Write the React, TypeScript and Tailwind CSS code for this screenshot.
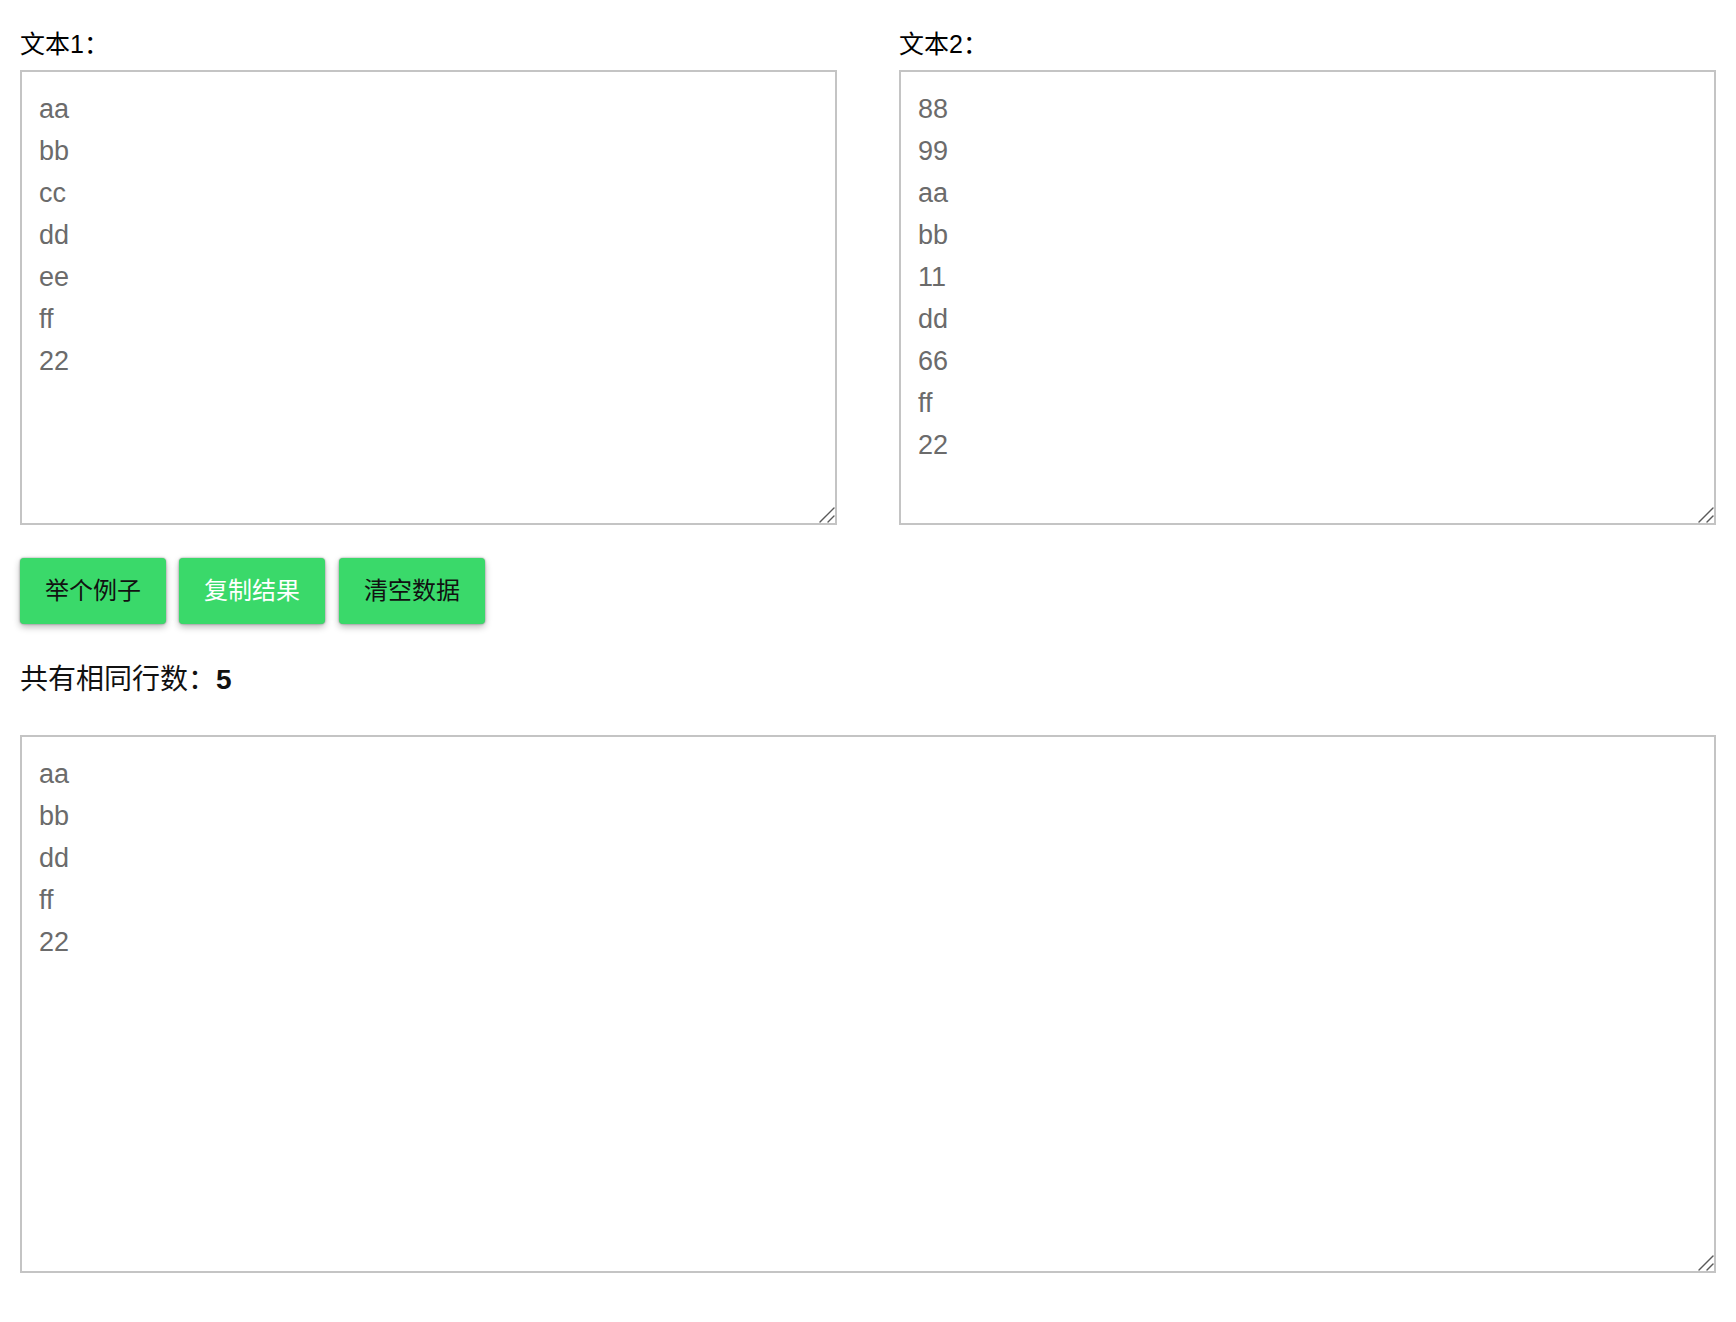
import React from "react";

const left = ["aa", "bb", "cc", "dd", "ee", "ff", "22"].join("\n");
const right = ["88", "99", "aa", "bb", "11", "dd", "66", "ff", "22"].join("\n");
const common = ["aa", "bb", "dd", "ff", "22"].join("\n");

const areaCls =
  "block w-full h-full resize-none border-2 border-[#c4c4c4] bg-white pl-[17px] pr-[15px] py-[16px] text-[27px] leading-[42px] text-[#6b6b6b] outline-none";

const btnCls =
  "h-[66px] w-[146px] rounded-[4px] bg-[#3ad96a] text-[24px] leading-[66px] shadow-[0_0_2px_rgba(0,0,0,0.45),0_3px_7px_rgba(0,0,0,0.28)]";

function Grip() {
  return (
    <svg
      className="pointer-events-none absolute bottom-[2px] right-[2px]"
      width="16"
      height="16"
      viewBox="0 0 16 16"
    >
      <path d="M1 15 L15 1" stroke="#5a5a5a" strokeWidth="1.4" strokeLinecap="round" />
      <path d="M9 15 L15 9" stroke="#5a5a5a" strokeWidth="1.4" strokeLinecap="round" />
    </svg>
  );
}

function TextBox({ value, className }: { value: string; className: string }) {
  return (
    <div className={`relative ${className}`}>
      <textarea className={areaCls} defaultValue={value} />
      <Grip />
    </div>
  );
}

export default function App() {
  return (
    <div className="min-h-screen bg-white px-5 pt-[28px] font-['Liberation_Sans','Noto_Sans_CJK_SC',sans-serif]">
      <div className="flex gap-[62px]">
        <div className="w-[817px]">
          <label className="block text-[25px] leading-[32px] text-black">文本1：</label>
          <TextBox value={left} className="mt-[10px] h-[455px]" />
        </div>
        <div className="w-[817px]">
          <label className="block text-[25px] leading-[32px] text-black">文本2：</label>
          <TextBox value={right} className="mt-[10px] h-[455px]" />
        </div>
      </div>

      <div className="mt-[33px] flex gap-[13px]">
        <button className={`${btnCls} text-[#111]`}>举个例子</button>
        <button className={`${btnCls} text-white`}>复制结果</button>
        <button className={`${btnCls} ml-px text-[#111]`}>清空数据</button>
      </div>

      <div className="mt-[38px] text-[28px] leading-[36px] text-[#111]">
        共有相同行数：<span className="font-bold">5</span>
      </div>

      <TextBox value={common} className="mt-[37px] h-[538px]" />
    </div>
  );
}
